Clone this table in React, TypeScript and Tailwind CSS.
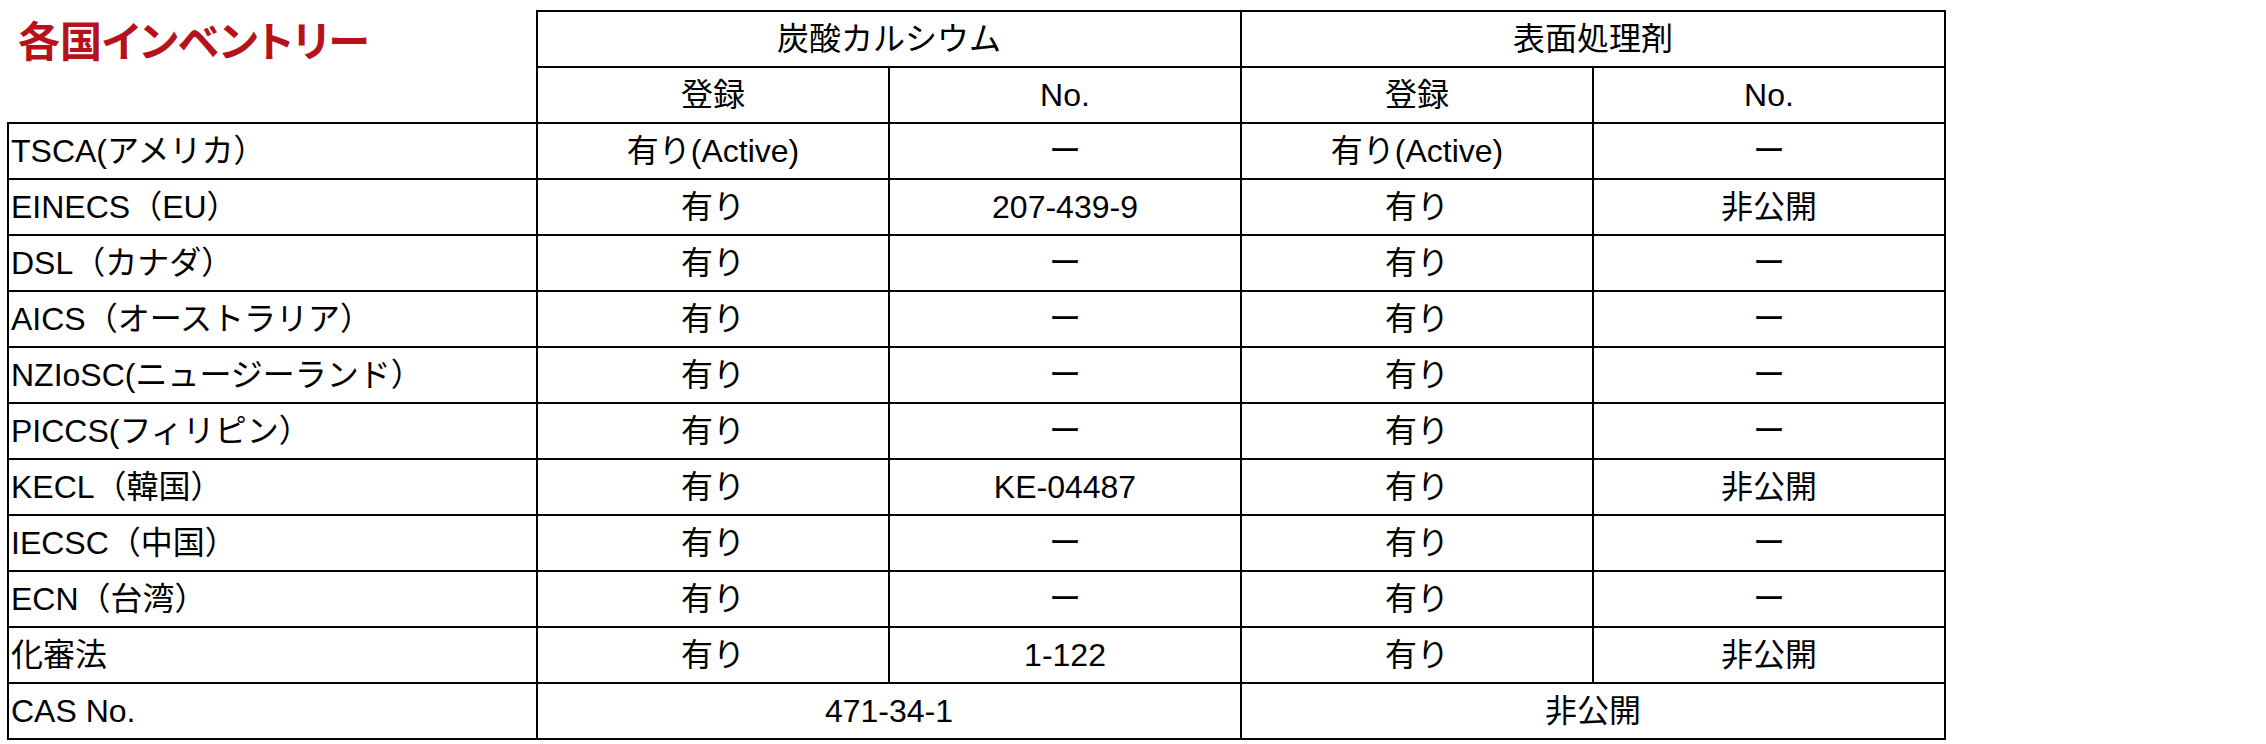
const FONT = "font-['Liberation_Sans','Noto_Sans_CJK_JP',sans-serif]";

type Row = { label: string; cells: string[] };

const ROWS: Row[] = [
  { label: "TSCA(アメリカ）", cells: ["有り(Active)", "ー", "有り(Active)", "ー"] },
  { label: "EINECS（EU）", cells: ["有り", "207-439-9", "有り", "非公開"] },
  { label: "DSL（カナダ）", cells: ["有り", "ー", "有り", "ー"] },
  { label: "AICS（オーストラリア）", cells: ["有り", "ー", "有り", "ー"] },
  { label: "NZIoSC(ニュージーランド）", cells: ["有り", "ー", "有り", "ー"] },
  { label: "PICCS(フィリピン）", cells: ["有り", "ー", "有り", "ー"] },
  { label: "KECL（韓国）", cells: ["有り", "KE-04487", "有り", "非公開"] },
  { label: "IECSC（中国）", cells: ["有り", "ー", "有り", "ー"] },
  { label: "ECN（台湾）", cells: ["有り", "ー", "有り", "ー"] },
  { label: "化審法", cells: ["有り", "1-122", "有り", "非公開"] },
];

const cell = "border-2 border-black text-center align-middle";

export default function App() {
  return (
    <div className={`min-h-[744px] w-[2266px] bg-white pl-[7px] pt-[10px] text-[32px] leading-none text-black ${FONT}`}>
      <table className="table-fixed border-collapse">
        <colgroup>
          <col className="w-[529px]" />
          <col className="w-[352px]" />
          <col className="w-[352px]" />
          <col className="w-[352px]" />
          <col className="w-[352px]" />
        </colgroup>
        <thead>
          <tr className="h-[56px]">
            <th rowSpan={2} className="border-0 p-0 text-left align-top">
              <h1 className="pl-[10px] pt-[7px] font-['Noto_Sans_CJK_JP',sans-serif] text-[42px] leading-none font-bold text-[#b5121b] [font-feature-settings:'palt']">
                各国インベントリー
              </h1>
            </th>
            <th colSpan={2} className={`${cell} font-normal`}>炭酸カルシウム</th>
            <th colSpan={2} className={`${cell} font-normal`}>表面処理剤</th>
          </tr>
          <tr className="h-[56px]">
            <th className={`${cell} font-normal`}>登録</th>
            <th className={`${cell} font-normal`}>No.</th>
            <th className={`${cell} font-normal`}>登録</th>
            <th className={`${cell} font-normal`}>No.</th>
          </tr>
        </thead>
        <tbody>
          {ROWS.map((row) => (
            <tr key={row.label} className="h-[56px]">
              <td className="border-2 border-black pl-[2px] text-left align-middle">{row.label}</td>
              {row.cells.map((value, i) => (
                <td key={i} className={cell}>
                  {value}
                </td>
              ))}
            </tr>
          ))}
          <tr className="h-[56px]">
            <td className="border-2 border-black pl-[2px] text-left align-middle">CAS No.</td>
            <td colSpan={2} className={cell}>471-34-1</td>
            <td colSpan={2} className={cell}>非公開</td>
          </tr>
        </tbody>
      </table>
    </div>
  );
}
